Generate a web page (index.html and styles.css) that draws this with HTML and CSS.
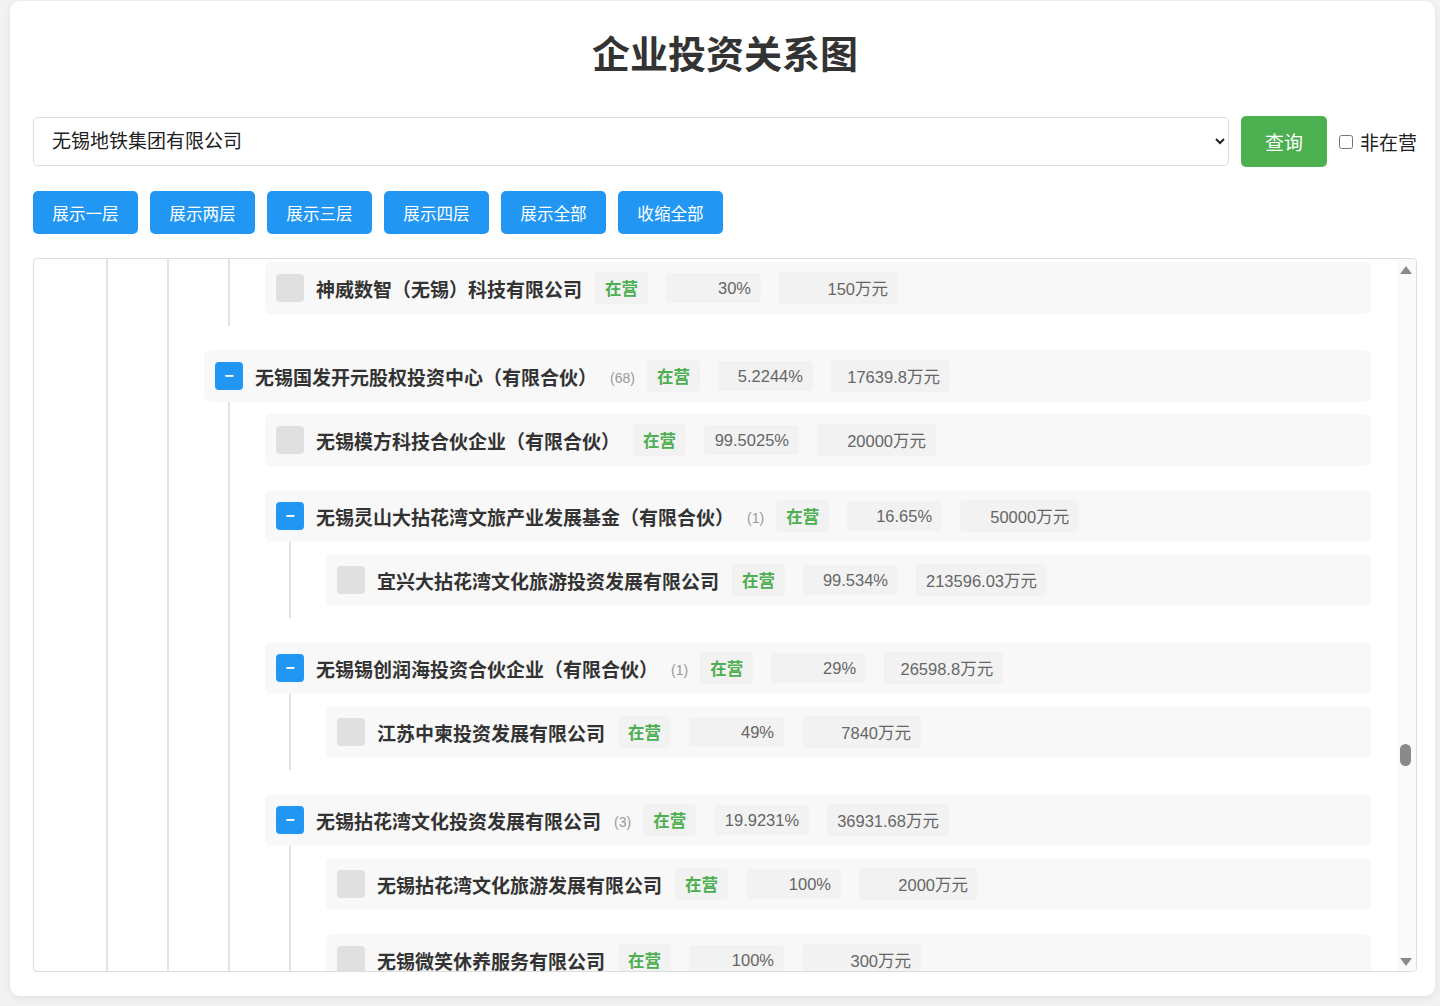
FILE: index.html
```html
<!DOCTYPE html>
<html lang="zh-CN">
<head>
    <meta charset="UTF-8">
    <meta name="viewport" content="width=device-width, initial-scale=1.0">
    <title>企业投资关系图</title>
    <link rel="stylesheet" href="styles.css">
</head>
<body>
    <div class="page">
        <h1 class="title">企业投资关系图</h1>

        <div class="search-bar">
            <select class="company-select">
                <option>无锡地铁集团有限公司</option>
            </select>
            <button class="query-btn">查询</button>
            <label class="inactive"><input type="checkbox"> 非在营</label>
        </div>

        <div class="level-buttons">
            <button class="level-btn">展示一层</button>
            <button class="level-btn">展示两层</button>
            <button class="level-btn">展示三层</button>
            <button class="level-btn">展示四层</button>
            <button class="level-btn">展示全部</button>
            <button class="level-btn">收缩全部</button>
        </div>

        <div class="tree-box">
            <!-- scrolled down: rows of upper levels are above the view -->
            <div class="tree">
                <div class="children">
                    <div class="node">
                        <div class="children">
                            <div class="node">
                                <div class="children">
                                    <div class="node">
                                        <div class="row">
                                            <span class="toggle leaf"></span>
                                            <span class="name">神威数智（无锡）科技有限公司</span>
                                            <span class="status">在营</span>
                                            <span class="ratio">30%</span>
                                            <span class="amount">150万元</span>
                                        </div>
                                    </div>
                                </div>
                            </div>

                            <div class="node">
                                <div class="row">
                                    <span class="toggle open">−</span>
                                    <span class="name">无锡国发开元股权投资中心（有限合伙）</span>
                                    <span class="count">(68)</span>
                                    <span class="status">在营</span>
                                    <span class="ratio">5.2244%</span>
                                    <span class="amount">17639.8万元</span>
                                </div>
                                <div class="children">
                                    <div class="node">
                                        <div class="row">
                                            <span class="toggle leaf"></span>
                                            <span class="name">无锡模方科技合伙企业（有限合伙）</span>
                                            <span class="status">在营</span>
                                            <span class="ratio">99.5025%</span>
                                            <span class="amount">20000万元</span>
                                        </div>
                                    </div>

                                    <div class="node">
                                        <div class="row">
                                            <span class="toggle open">−</span>
                                            <span class="name">无锡灵山大拈花湾文旅产业发展基金（有限合伙）</span>
                                            <span class="count">(1)</span>
                                            <span class="status">在营</span>
                                            <span class="ratio">16.65%</span>
                                            <span class="amount">50000万元</span>
                                        </div>
                                        <div class="children">
                                            <div class="node">
                                                <div class="row">
                                                    <span class="toggle leaf"></span>
                                                    <span class="name">宜兴大拈花湾文化旅游投资发展有限公司</span>
                                                    <span class="status">在营</span>
                                                    <span class="ratio">99.534%</span>
                                                    <span class="amount">213596.03万元</span>
                                                </div>
                                            </div>
                                        </div>
                                    </div>

                                    <div class="node">
                                        <div class="row">
                                            <span class="toggle open">−</span>
                                            <span class="name">无锡锡创润海投资合伙企业（有限合伙）</span>
                                            <span class="count">(1)</span>
                                            <span class="status">在营</span>
                                            <span class="ratio">29%</span>
                                            <span class="amount">26598.8万元</span>
                                        </div>
                                        <div class="children">
                                            <div class="node">
                                                <div class="row">
                                                    <span class="toggle leaf"></span>
                                                    <span class="name">江苏中柬投资发展有限公司</span>
                                                    <span class="status">在营</span>
                                                    <span class="ratio">49%</span>
                                                    <span class="amount">7840万元</span>
                                                </div>
                                            </div>
                                        </div>
                                    </div>

                                    <div class="node">
                                        <div class="row">
                                            <span class="toggle open">−</span>
                                            <span class="name">无锡拈花湾文化投资发展有限公司</span>
                                            <span class="count">(3)</span>
                                            <span class="status">在营</span>
                                            <span class="ratio">19.9231%</span>
                                            <span class="amount">36931.68万元</span>
                                        </div>
                                        <div class="children">
                                            <div class="node">
                                                <div class="row">
                                                    <span class="toggle leaf"></span>
                                                    <span class="name">无锡拈花湾文化旅游发展有限公司</span>
                                                    <span class="status">在营</span>
                                                    <span class="ratio">100%</span>
                                                    <span class="amount">2000万元</span>
                                                </div>
                                            </div>
                                            <div class="node">
                                                <div class="row">
                                                    <span class="toggle leaf"></span>
                                                    <span class="name">无锡微笑休养服务有限公司</span>
                                                    <span class="status">在营</span>
                                                    <span class="ratio">100%</span>
                                                    <span class="amount">300万元</span>
                                                </div>
                                            </div>
                                            <div class="node">
                                                <div class="row">
                                                    <span class="toggle leaf"></span>
                                                    <span class="name">无锡拈花湾物业管理有限公司</span>
                                                    <span class="status">在营</span>
                                                    <span class="ratio">100%</span>
                                                    <span class="amount">500万元</span>
                                                </div>
                                            </div>
                                        </div>
                                    </div>
                                </div>
                            </div>
                        </div>
                    </div>
                </div>
            </div>

            <div class="scrollbar">
                <span class="sb-up"></span>
                <span class="sb-thumb"></span>
                <span class="sb-down"></span>
            </div>
        </div>
    </div>
</body>
</html>
```

FILE: styles.css
```css
* {
    box-sizing: border-box;
}
body {
    font-family: "Liberation Sans", "Noto Sans CJK SC", sans-serif;
    background-color: #f3f3f3;
    color: #333;
    margin: 0;
    padding: 1px 5px 10px 10px;
}
.page {
    background: white;
    border-radius: 10px;
    box-shadow: 0 2px 10px rgba(0, 0, 0, 0.08);
    height: 995px;
    padding: 0 18px 24px 23px;
    display: flex;
    flex-direction: column;
}
.title {
    margin: 29px 0 36px;
    text-align: center;
    font-size: 38px;
    line-height: 50px;
    font-weight: bold;
    color: #333;
}
.search-bar {
    display: flex;
    align-items: center;
    gap: 12px;
}
.company-select {
    flex: 1;
    height: 49px;
    padding: 0 12px 0 14px;
    font-family: inherit;
    font-size: 19px;
    color: #222;
    background: white;
    border: 1px solid #ddd;
    border-radius: 5px;
}
.query-btn {
    width: 86px;
    height: 51px;
    background: #4caf50;
    color: white;
    border: none;
    border-radius: 5px;
    font-family: inherit;
    font-size: 19px;
    cursor: pointer;
}
.inactive {
    display: flex;
    align-items: center;
    gap: 7px;
    font-size: 19px;
    color: #222;
}
.inactive input {
    width: 14px;
    height: 14px;
    margin: 0;
}
.level-buttons {
    display: flex;
    gap: 12px;
    margin-top: 24px;
}
.level-btn {
    width: 105px;
    height: 43px;
    padding: 0;
    background: #2196f3;
    color: white;
    border: none;
    border-radius: 5px;
    font-family: inherit;
    font-size: 16.6px;
    cursor: pointer;
}
.tree-box {
    flex: 1;
    position: relative;
    margin-top: 24px;
    border: 1px solid #ddd;
    border-radius: 4px;
    overflow: hidden;
}
.tree {
    margin-top: -33px;
    padding: 0 45px 0 48px;
}
.children {
    display: flex;
    flex-direction: column;
    margin-left: 24px;
    border-left: 2px solid #e2e2e2;
    padding-left: 35px;
}
.node {
    margin: 12px 0;
}
.row {
    display: flex;
    align-items: center;
    padding: 10px 10px 10px 11px;
    background: #f8f8f8;
    border-radius: 6px;
}
.toggle {
    flex: none;
    width: 28px;
    height: 28px;
    border-radius: 4px;
    display: flex;
    align-items: center;
    justify-content: center;
}
.toggle.leaf {
    background: #e0e0e0;
}
.toggle.open {
    background: #2196f3;
    color: white;
    font-size: 16px;
    font-weight: bold;
    cursor: pointer;
}
.name {
    margin-left: 12px;
    font-size: 19px;
    font-weight: bold;
    color: #333;
    white-space: nowrap;
}
.count {
    margin-left: 13px;
    font-size: 14px;
    color: #999;
    margin-top: 4px;
}
.count + .status {
    margin-left: 12px;
}
.status,
.ratio,
.amount {
    display: flex;
    align-items: center;
    padding: 0 10px;
    background: #f2f2f2;
    border-radius: 4px;
    font-size: 16.5px;
    white-space: nowrap;
}
.status {
    margin-left: 13px;
    height: 32px;
    color: #4caf50;
    font-weight: bold;
}
.ratio {
    margin-left: 18px;
    min-width: 95px;
    height: 30px;
    justify-content: flex-end;
    color: #666;
}
.amount {
    margin-left: 18px;
    min-width: 119px;
    height: 32px;
    justify-content: flex-end;
    color: #666;
}
.scrollbar {
    position: absolute;
    top: 0;
    right: 0;
    bottom: 0;
    width: 19px;
    background: #fafafa;
}
.sb-up,
.sb-down {
    position: absolute;
    left: 3px;
    width: 0;
    height: 0;
    border-left: 6px solid transparent;
    border-right: 6px solid transparent;
}
.sb-up {
    top: 7px;
    border-bottom: 8px solid #8a8a8a;
}
.sb-down {
    bottom: 5px;
    border-top: 8px solid #8a8a8a;
}
.sb-thumb {
    position: absolute;
    top: 485px;
    left: 3px;
    width: 11px;
    height: 22px;
    border-radius: 6px;
    background: #8a8a8a;
}
```
